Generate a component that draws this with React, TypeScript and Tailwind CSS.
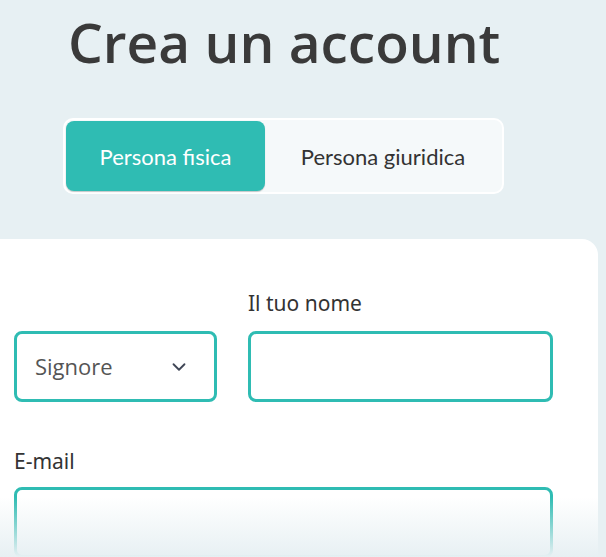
import { ChevronDown } from "lucide-react";

const App = () => {
  return (
    <div className="relative h-[557px] w-[606px] overflow-hidden bg-[#e7f0f3] font-['Lato',sans-serif]">
      <h1 className="pl-[68px] pt-[8px] font-['Open_Sans',sans-serif] text-[55px] font-semibold leading-[68px] text-[#3a3a3a]">
        Crea un account
      </h1>

      <div className="ml-[63px] mt-[42px] flex w-[441px] rounded-[10px] border-2 border-white bg-[#f5f9fa] p-px">
        <button className="h-[70px] w-[199px] rounded-[8px] bg-[#2fbcb3] text-[22px] text-white shadow-[0_1px_1px_rgba(0,0,0,0.2)]">
          Persona fisica
        </button>
        <button className="h-[70px] flex-1 text-[22px] text-[#333]">
          Persona giuridica
        </button>
      </div>

      <div className="mt-[45px] w-[598px] rounded-tr-[16px] bg-white pb-10 pl-[14px] pt-[50px] font-['Noto_Sans',sans-serif]">
        <div className="grid w-[539px] grid-cols-[203px_305px] gap-x-[31px]">
          <div />
          <label className="mb-[14px] text-[21px] leading-[28px] text-[#333]">Il tuo nome</label>
          <div className="flex h-[71px] items-center justify-between rounded-[8px] border-[3px] border-[#2fbcb3] pl-[18px] pr-[24px]">
            <span className="font-['Open_Sans',sans-serif] text-[22px] text-[#555]">Signore</span>
            <ChevronDown size={22} strokeWidth={2} className="text-[#3f4656]" />
          </div>
          <div className="h-[71px] rounded-[8px] border-[3px] border-[#2fbcb3]" />
        </div>

        <label className="mt-[45px] mb-[12px] block text-[21px] leading-[28px] text-[#333]">E-mail</label>
        <div className="h-[71px] w-[539px] rounded-[8px] border-[3px] border-[#2fbcb3]" />
      </div>

      <div className="pointer-events-none absolute bottom-0 left-0 h-[60px] w-full bg-gradient-to-b from-[#e7f0f3]/0 to-[#e7f0f3]" />
    </div>
  );
};

export default App;
